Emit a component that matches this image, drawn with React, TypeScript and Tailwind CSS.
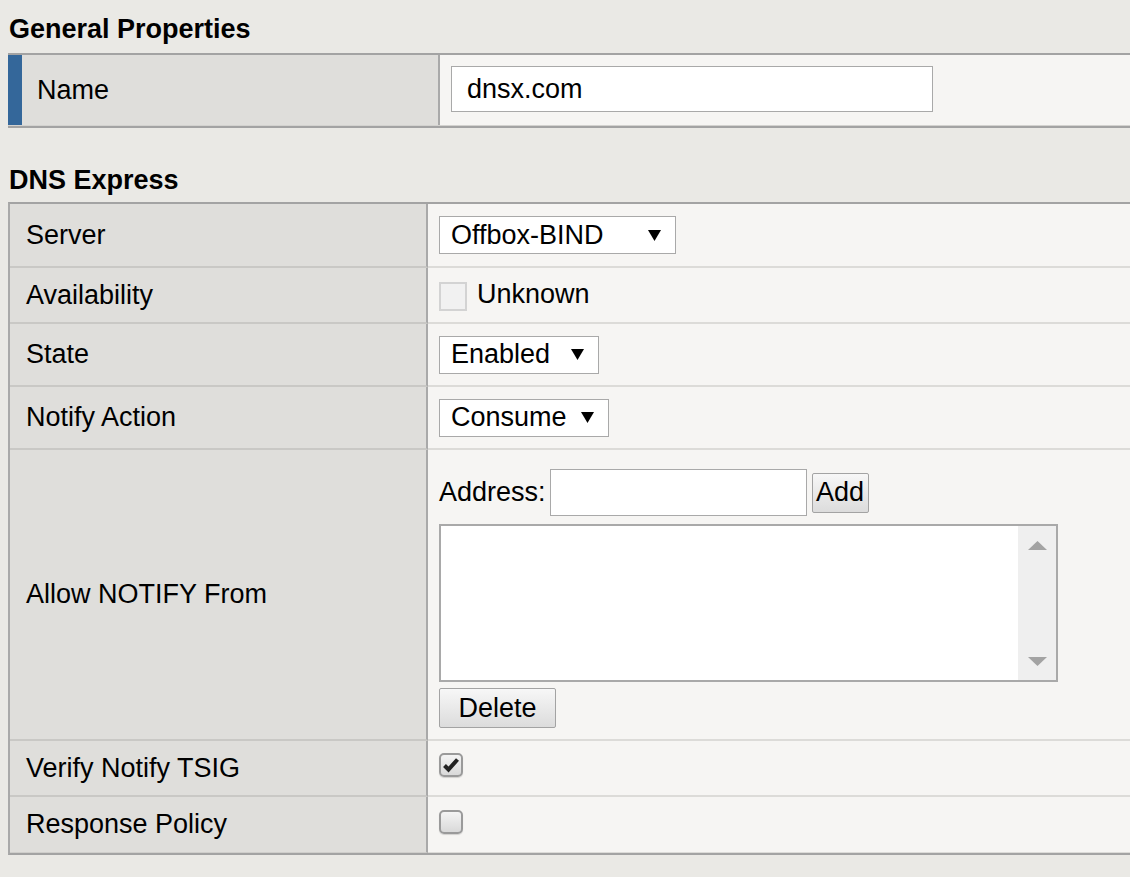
import React from "react";

const Arrow = () => (
  <svg width="13" height="11" viewBox="0 0 13 11" className="shrink-0">
    <polygon points="0,0 13,0 6.5,11" fill="#000" />
  </svg>
);

function Select({ label, cls }: { label: string; cls: string }) {
  return (
    <div
      className={`${cls} h-[38px] bg-white border border-[#a9a9a9] flex items-center justify-between pl-[11px] pr-[14px] leading-none`}
    >
      <span>{label}</span>
      <Arrow />
    </div>
  );
}

function Row({
  label,
  h,
  last,
  children,
  valueCls = "items-center",
}: {
  label: string;
  h: string;
  last?: boolean;
  children?: React.ReactNode;
  valueCls?: string;
}) {
  return (
    <div className={`flex ${h}`}>
      <div
        className={`w-[418px] shrink-0 bg-[#dfdedb] border-r-2 border-r-[#a9a9a9] pl-[16px] flex items-center ${
          last ? "border-b border-b-[#cfcecb]" : "border-b-2 border-b-[#c9c8c5]"
        }`}
      >
        {label}
      </div>
      <div
        className={`flex-1 bg-[#f6f5f3] pl-[11px] flex ${valueCls} ${
          last ? "border-b border-b-[#dcdbd8]" : "border-b-2 border-b-[#dcdbd8]"
        }`}
      >
        {children}
      </div>
    </div>
  );
}

function Check({ checked }: { checked?: boolean }) {
  return (
    <div className="w-[24px] h-[24px] rounded-[5px] border-2 border-[#9a9a9a] bg-gradient-to-b from-[#f4f4f4] to-[#d9d9d9] flex items-center justify-center shadow-[0_1px_1px_rgba(0,0,0,0.15)] mb-[6px]">
      {checked && (
        <svg width="16" height="16" viewBox="0 0 16 16">
          <path d="M1.5 8.5 L5.5 12.5 L14.5 2.5" fill="none" stroke="#222" strokeWidth="4" strokeLinejoin="miter" />
        </svg>
      )}
    </div>
  );
}

function Btn({ label, cls }: { label: string; cls: string }) {
  return (
    <div
      className={`${cls} h-[40px] border border-[#a3a3a3] rounded-[2px] bg-gradient-to-b from-[#f7f7f7] to-[#dcdcdc] flex items-center justify-center leading-none`}
    >
      {label}
    </div>
  );
}

export default function App() {
  return (
    <div className="w-[1130px] h-[877px] overflow-hidden bg-[#eae9e5] text-black text-[27px] font-['Liberation_Sans',Arial,sans-serif]">
      {/* General Properties */}
      <div className="h-[53px] pt-[14px] pl-[9px] font-bold leading-[31px]">General Properties</div>
      <div className="ml-[8px] border-t-2 border-t-[#a3a3a3] border-b-2 border-b-[#a3a3a3]">
        <div className="flex h-[71px] border-b border-b-[#d3d2cf]">
          <div className="w-[432px] shrink-0 bg-[#dfdedb] border-l-[14px] border-l-[#34679a] border-r-2 border-r-[#a9a9a9] pl-[15px] flex items-center">
            Name
          </div>
          <div className="flex-1 bg-[#f6f5f3] pl-[11px] pt-[11px]">
            <div className="w-[482px] h-[46px] bg-white border border-[#a9a9a9] pl-[15px] flex items-center leading-none">
              dnsx.com
            </div>
          </div>
        </div>
      </div>

      {/* DNS Express */}
      <div className="h-[74px] pt-[37px] pl-[9px] font-bold leading-[31px]">DNS Express</div>
      <div className="ml-[8px] border-t-2 border-t-[#a3a3a3] border-l-2 border-l-[#a9a9a9] border-b-2 border-b-[#a3a3a3]">
        <Row label="Server" h="h-[64px]">
          <Select label="Offbox-BIND" cls="w-[237px]" />
        </Row>
        <Row label="Availability" h="h-[56px]">
          <div className="w-[28px] h-[29px] border-2 border-[#d3d3d3] bg-[#f1f1f1] mt-[2px]" />
          <span className="ml-[10px] mb-[2px]">Unknown</span>
        </Row>
        <Row label="State" h="h-[63px]">
          <Select label="Enabled" cls="w-[160px]" />
        </Row>
        <Row label="Notify Action" h="h-[63px]">
          <Select label="Consume" cls="w-[170px]" />
        </Row>
        <Row label="Allow NOTIFY From" h="h-[291px]" valueCls="flex-col pt-[19px]">
          <div className="flex items-center">
            <span>Address:</span>
            <div className="ml-[4px] w-[257px] h-[47px] bg-white border border-[#a9a9a9]" />
            <Btn label="Add" cls="ml-[5px] w-[57px]" />
          </div>
          <div className="mt-[8px] w-[619px] h-[158px] bg-white border-2 border-[#a9a9a9] flex justify-end">
            <div className="w-[38px] h-full bg-[#efefef] flex flex-col items-center justify-between pt-[15px] pb-[14px]">
              <svg width="19" height="9" viewBox="0 0 19 9">
                <polygon points="9.5,0 19,9 0,9" fill="#a3a3a3" />
              </svg>
              <svg width="19" height="9" viewBox="0 0 19 9">
                <polygon points="0,0 19,0 9.5,9" fill="#a3a3a3" />
              </svg>
            </div>
          </div>
          <Btn label="Delete" cls="mt-[6px] w-[117px]" />
        </Row>
        <Row label="Verify Notify TSIG" h="h-[56px]">
          <Check checked />
        </Row>
        <Row label="Response Policy" h="h-[56px]" last>
          <Check />
        </Row>
      </div>
    </div>
  );
}
